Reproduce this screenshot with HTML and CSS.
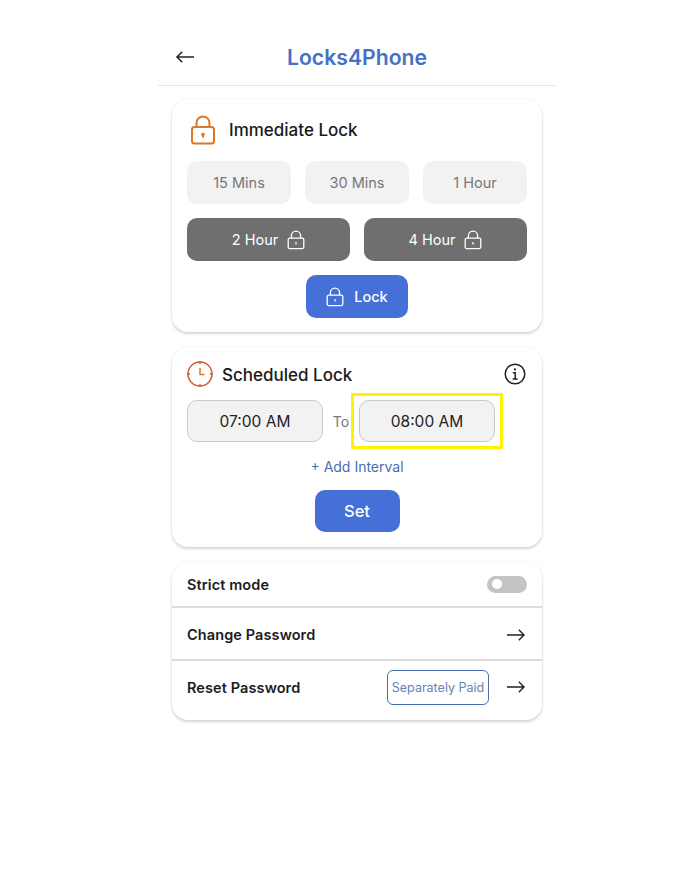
FILE: index.html
```html
<!DOCTYPE html>
<html lang="en">
<head>
  <meta charset="UTF-8" />
  <meta name="viewport" content="width=device-width, initial-scale=1.0">
  <title>Locks4Phone</title>
  <link rel="stylesheet" href="styles.css">
</head>
<body>
  <div class="phone">
    <header class="top-bar">
      <svg class="back-icon" width="20" height="14" viewBox="0 0 20 14" fill="none" stroke="#222" stroke-width="1.5">
        <path d="M19 7H2M7.2 1.8 2 7l5.2 5.2"/>
      </svg>
      <h1 class="app-title">Locks4Phone</h1>
    </header>

    <section class="card card-immediate">
      <div class="card-head">
        <svg class="lock-big" width="26" height="30" viewBox="0 0 26 30" fill="none" stroke="#d9772b" stroke-width="2">
          <rect x="2" y="12" width="22" height="16.5" rx="2.5"/>
          <path d="M6.5 12V8a6.5 6.5 0 0 1 13 0v4"/>
          <path d="M13 19v3.5" stroke-width="2"/>
          <circle cx="13" cy="19.5" r="1.8" fill="#d9772b" stroke="none"/>
        </svg>
        <h2 class="card-title">Immediate Lock</h2>
      </div>
      <div class="btn-row three">
        <button class="btn btn-light">15 Mins</button>
        <button class="btn btn-light">30 Mins</button>
        <button class="btn btn-light">1 Hour</button>
      </div>
      <div class="btn-row two">
        <button class="btn btn-dark">2 Hour
          <svg class="lock-small" width="18" height="20" viewBox="0 0 18 20" fill="none" stroke="#fff" stroke-width="1.3">
            <rect x="1.2" y="8.2" width="15.6" height="10.4" rx="1.5"/>
            <path d="M4.4 8.2V5.8a4.6 4.6 0 0 1 9.2 0v2.4M9 12v2.6"/>
          </svg>
        </button>
        <button class="btn btn-dark">4 Hour
          <svg class="lock-small" width="18" height="20" viewBox="0 0 18 20" fill="none" stroke="#fff" stroke-width="1.3">
            <rect x="1.2" y="8.2" width="15.6" height="10.4" rx="1.5"/>
            <path d="M4.4 8.2V5.8a4.6 4.6 0 0 1 9.2 0v2.4M9 12v2.6"/>
          </svg>
        </button>
      </div>
      <div class="center-row">
        <button class="btn btn-blue btn-lock">
          <svg class="lock-small" width="18" height="20" viewBox="0 0 18 20" fill="none" stroke="#fff" stroke-width="1.3">
            <rect x="1.2" y="8.2" width="15.6" height="10.4" rx="1.5"/>
            <path d="M4.4 8.2V5.8a4.6 4.6 0 0 1 9.2 0v2.4M9 12v2.6"/>
          </svg>
          Lock
        </button>
      </div>
    </section>

    <section class="card card-scheduled">
      <div class="sched-head">
        <svg width="26" height="26" viewBox="1 1 26 26" fill="none" stroke="#cf5f38" stroke-width="1.5">
          <circle cx="14" cy="14" r="12"/>
          <path d="M14 1v3M14 24v3M1 14h3M24 14h3"/>
          <path d="M14 8v6.5h4.5" stroke="#d9772b"/>
        </svg>
        <h2 class="card-title sched-title">Scheduled Lock</h2>
        <svg class="info-icon" width="22" height="22" viewBox="0 0 22 22" fill="none" stroke="#222" stroke-width="1.5">
          <circle cx="11" cy="11" r="9.8"/>
          <path d="M8.8 9.8H11.2V16M8.6 16h5"/>
          <circle cx="11" cy="6.4" r="1.1" fill="#222" stroke="none"/>
        </svg>
      </div>
      <div class="time-row">
        <div class="time-box">07:00 AM</div>
        <span class="time-to">To</span>
        <div class="time-box highlighted">08:00 AM</div>
      </div>
      <div class="add-interval">+ Add Interval</div>
      <div class="center-row">
        <button class="btn btn-blue btn-set">Set</button>
      </div>
    </section>

    <section class="card card-list">
      <div class="list-row row-strict">
        <span class="row-label">Strict mode</span>
        <span class="toggle"><span class="toggle-knob"></span></span>
      </div>
      <div class="list-row row-change">
        <span class="row-label">Change Password</span>
        <svg width="20" height="14" viewBox="0 0 20 14" fill="none" stroke="#222" stroke-width="1.4">
          <path d="M1 7h17M12.8 1.8 18 7l-5.2 5.2"/>
        </svg>
      </div>
      <div class="list-row row-reset">
        <span class="row-label">Reset Password</span>
        <span class="paid-badge">Separately Paid</span>
        <svg width="20" height="14" viewBox="0 0 20 14" fill="none" stroke="#222" stroke-width="1.4">
          <path d="M1 7h17M12.8 1.8 18 7l-5.2 5.2"/>
        </svg>
      </div>
    </section>
  </div>
</body>
</html>
```

FILE: styles.css
```css
body {
  font-family: 'Inter', sans-serif;
  margin: 0;
  background: #fff;
  color: #1c1c1c;
}
.phone {
  width: 398px;
  margin-left: 158px;
  min-height: 880px;
}
.top-bar {
  height: 86px;
  box-sizing: border-box;
  border-bottom: 1px solid #e6e6e6;
  display: flex;
  align-items: center;
  justify-content: center;
  padding-top: 29px;
  position: relative;
}
.back-icon {
  position: absolute;
  left: 17px;
  top: 50px;
}
.app-title {
  margin: 0;
  font-size: 21.2px;
  font-weight: 600;
  color: #4570c8;
}
.card {
  width: 370px;
  box-sizing: border-box;
  margin: 13px 0 15px 14px;
  background: #fff;
  border-radius: 16px;
  box-shadow: 0 2px 3px rgba(0, 0, 0, 0.16), 0 0 2px rgba(0, 0, 0, 0.08);
}
.card + .card {
  margin-top: 15px;
}
.card-immediate {
  height: 233px;
  padding: 15px 15px 0;
}
.card-scheduled {
  height: 200px;
  padding: 14px 15px 0;
}
.card-list {
  height: 158px;
  margin-bottom: 0;
}
.card-head {
  display: flex;
  align-items: center;
  gap: 13px;
  height: 32px;
  padding-left: 3px;
  margin-bottom: 15px;
}
.card-title {
  margin: 0;
  font-size: 17px;
  font-weight: 500;
  color: #1a1a1a;
}
.sched-title {
  padding-top: 1px;
}
.btn {
  border: none;
  border-radius: 10px;
  font-family: inherit;
  height: 43px;
  font-size: 14.5px;
  display: flex;
  align-items: center;
  justify-content: center;
}
.btn-row {
  display: flex;
  gap: 14px;
  margin-bottom: 14px;
}
.btn-row .btn {
  flex: 1;
}
.btn-light {
  background: #f2f2f2;
  color: #777;
}
.btn-dark {
  background: #6f6f6f;
  color: #fff;
  gap: 9px;
}
.btn-blue {
  background: #4470d8;
  color: #fff;
}
.center-row {
  display: flex;
  justify-content: center;
}
.btn-lock {
  width: 102px;
  gap: 10px;
  font-weight: 500;
}
.btn-set {
  width: 85px;
  height: 42px;
  font-size: 16.5px;
  font-weight: 500;
}
.sched-head {
  display: flex;
  align-items: center;
  gap: 9px;
  height: 26px;
  margin-bottom: 13px;
}
.info-icon {
  margin-left: auto;
  margin-right: 1px;
}
.time-row {
  display: flex;
  align-items: center;
  height: 42px;
}
.time-box {
  width: 136px;
  height: 42px;
  box-sizing: border-box;
  background: #f2f2f2;
  border: 1px solid #c9c9c9;
  border-radius: 10px;
  font-size: 15.5px;
  display: flex;
  align-items: center;
  justify-content: center;
  color: #222;
}
.time-to {
  width: 36px;
  text-align: center;
  font-size: 14px;
  color: #777;
}
.highlighted {
  position: relative;
}
.highlighted::after {
  content: "";
  position: absolute;
  top: -8px;
  left: -9px;
  right: -9px;
  bottom: -8px;
  border: 3px solid #fff200;
}
.add-interval {
  text-align: center;
  font-size: 14px;
  color: #4a6db5;
  margin: 16px 0 15px;
  line-height: 17px;
}
.list-row {
  display: flex;
  align-items: center;
  padding: 0 16px 0 15px;
  box-sizing: border-box;
}
.row-strict {
  height: 46px;
  border-bottom: 2px solid #dcdcdc;
}
.row-change {
  height: 53px;
  padding-top: 2px;
  border-bottom: 2px solid #dcdcdc;
}
.row-reset {
  height: 59px;
  padding-bottom: 7px;
}
.row-label {
  font-size: 14.5px;
  font-weight: 600;
  letter-spacing: 0.1px;
  color: #1c1c1c;
  margin-right: auto;
}
.toggle {
  width: 40px;
  height: 17px;
  margin-right: -1px;
  border-radius: 9px;
  background: #c4c4c4;
  display: flex;
  align-items: center;
  padding-left: 5px;
  box-sizing: border-box;
}
.toggle-knob {
  width: 10px;
  height: 10px;
  border-radius: 50%;
  background: #fff;
}
.paid-badge {
  width: 102px;
  height: 35px;
  box-sizing: border-box;
  border: 1px solid #4a6ea8;
  border-radius: 6px;
  font-size: 12.5px;
  color: #6583b5;
  display: flex;
  align-items: center;
  justify-content: center;
  margin-right: 17px;
  white-space: nowrap;
}
```
